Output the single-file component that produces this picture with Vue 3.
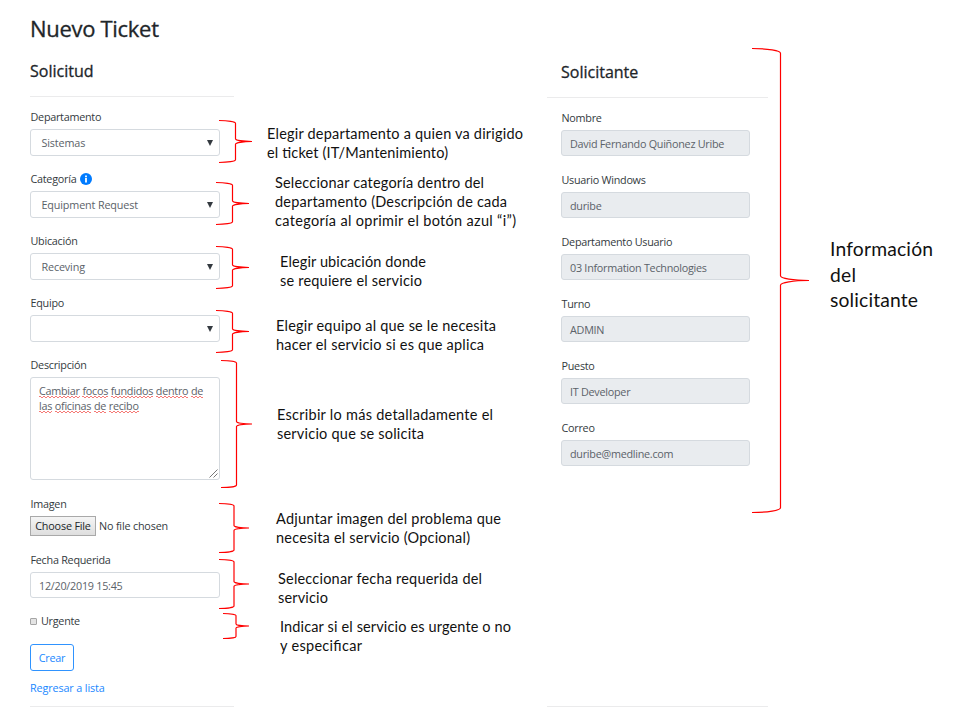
<script setup>
const selects = [
  { label: 'Departamento', value: 'Sistemas' },
  { label: 'Categoría', value: 'Equipment Request', info: true },
  { label: 'Ubicación', value: 'Receving' },
  { label: 'Equipo', value: '' },
]

const requester = [
  { label: 'Nombre', value: 'David Fernando Quiñonez Uribe' },
  { label: 'Usuario Windows', value: 'duribe' },
  { label: 'Departamento Usuario', value: '03 Information Technologies' },
  { label: 'Turno', value: 'ADMIN' },
  { label: 'Puesto', value: 'IT Developer' },
  { label: 'Correo', value: 'duribe@medline.com' },
]

const description = [
  ['Cambiar', 'focos', 'fundidos', 'dentro', 'de'],
  ['las', 'oficinas', 'de', 'recibo'],
]

// Right braces: left, right, top, bottom
const braces = [
  [219, 252, 120.5, 162.5],
  [216, 249, 182.5, 224.5],
  [216, 249, 246.5, 288.5],
  [216, 249, 310.5, 352.5],
  [221, 252, 360.5, 487.5],
  [219, 249, 503.5, 552.5],
  [219, 249, 559.5, 608.5],
  [223, 249, 613.5, 638.5],
  [752, 809, 48.5, 512.5],
]

function bracePath([l, r, t, b]) {
  const rx = (r - l) / 2
  const ry = Math.min(r - l, b - t) / 12
  const x = l + rx
  const m = (t + b) / 2
  return `M${l} ${t}A${rx} ${ry} 0 0 1 ${x} ${t + ry}V${m - ry}A${rx} ${ry} 0 0 0 ${r} ${m}A${rx} ${ry} 0 0 0 ${x} ${m + ry}V${b - ry}A${rx} ${ry} 0 0 1 ${l} ${b}`
}

// Note lines: x, baseline, width, text
const notes = [
  [267, 139, 256, 'Elegir departamento a quien va dirigido'],
  [267, 158, 181, 'el ticket (IT/Mantenimiento)'],
  [275, 188, 209, 'Seleccionar categoría dentro del'],
  [275, 207, 232, 'departamento (Descripción de cada'],
  [275, 226, 241, 'categoría al oprimir el botón azul “i”)'],
  [280, 267, 146, 'Elegir ubicación donde'],
  [280, 286, 142, 'se requiere el servicio'],
  [276, 331, 220, 'Elegir equipo al que se le necesita'],
  [276, 350, 208, 'hacer el servicio si es que aplica'],
  [277, 420, 216, 'Escribir lo más detalladamente el'],
  [277, 439, 147, 'servicio que se solicita'],
  [276, 524, 225, 'Adjuntar imagen del problema que'],
  [276, 543, 194, 'necesita el servicio (Opcional)'],
  [278, 584, 204, 'Seleccionar fecha requerida del'],
  [278, 603, 50, 'servicio'],
  [280, 632, 231, 'Indicar si el servicio es urgente o no'],
  [280, 651, 82, 'y especificar'],
]

const bigNotes = [
  [830, 256, 103, 'Información'],
  [830, 282, 26, 'del'],
  [830, 307, 88, 'solicitante'],
]
</script>

<template>
  <div class="page">
    <section class="request">
      <h1>Nuevo Ticket</h1>
      <h2>Solicitud</h2>
      <hr />
      <div v-for="s in selects" :key="s.label" class="group">
        <div class="label">
          {{ s.label }}
          <svg v-if="s.info" class="info" viewBox="0 0 12 12">
            <circle cx="6" cy="6" r="6" fill="#007bff" />
            <path d="M5.1 2.4h1.8v1.5H5.1zM5.1 4.8h1.8v4.6H5.1z" fill="#fff" />
          </svg>
        </div>
        <div class="control select">
          <span>{{ s.value }}</span>
          <svg class="arrow" viewBox="0 0 6 6"><path d="M0 0h6L3 6z" fill="#343a40" /></svg>
        </div>
      </div>
      <div class="group description">
        <div class="label">Descripción</div>
        <div class="control textarea">
          <div v-for="(line, i) in description" :key="i" class="line">
            <span v-for="(word, j) in line" :key="j" class="misspelled">{{ word }}</span>
          </div>
          <svg class="grip" viewBox="0 0 9 9"><path d="M.5 8.5l8-8M4.5 8.5l4-4" stroke="#777" fill="none" /></svg>
        </div>
      </div>
      <div class="group image">
        <div class="label">Imagen</div>
        <div class="file">
          <span class="choose">Choose File</span>
          <span>No file chosen</span>
        </div>
      </div>
      <div class="group date">
        <div class="label">Fecha Requerida</div>
        <div class="control">12/20/2019 15:45</div>
      </div>
      <div class="check"><i class="box"></i><span>Urgente</span></div>
      <div class="create">Crear</div>
      <div class="back">Regresar a lista</div>
      <hr />
    </section>

    <section class="requester">
      <h2>Solicitante</h2>
      <hr />
      <div class="fields">
        <div v-for="f in requester" :key="f.label" class="group">
          <div class="label">{{ f.label }}</div>
          <div class="control disabled">{{ f.value }}</div>
        </div>
      </div>
      <hr class="end" />
    </section>

    <svg class="annotations" width="960" height="720" viewBox="0 0 960 720">
      <path v-for="(b, i) in braces" :key="i" :d="bracePath(b)" class="brace" />
      <text v-for="n in notes" :key="n[1]" :x="n[0]" :y="n[1]" :textLength="n[2]" class="note">{{ n[3] }}</text>
      <text v-for="n in bigNotes" :key="n[1]" :x="n[0]" :y="n[1]" :textLength="n[2]" class="note big">{{ n[3] }}</text>
    </svg>
  </div>
</template>

<style>
body {
  background: #fff;
}
</style>

<style scoped>
* {
  box-sizing: border-box;
}
.page {
  position: relative;
  width: 960px;
  height: 720px;
  overflow: hidden;
  display: flex;
  background: #fff;
  color: #343a40;
  font: 10.8px/16px "Open Sans", "Noto Sans", sans-serif;
  letter-spacing: -0.26px;
}
.request {
  width: 204px;
  margin-left: 30px;
  padding-top: 12px;
}
.requester {
  width: 221px;
  margin-left: 313px;
  padding-top: 60px;
}
h1,
h2 {
  margin: 0;
  color: #212529;
  font-weight: 500;
  white-space: nowrap;
}
h1 {
  font-size: 22px;
  line-height: 32px;
  letter-spacing: -0.3px;
  -webkit-text-stroke: 0.3px #212529;
}
h2 {
  font-size: 16px;
  line-height: 25px;
  letter-spacing: 0;
  -webkit-text-stroke: 0.3px #212529;
}
.request h2 {
  margin-top: 15px;
}
.requester h2 {
  padding-left: 14px;
}
hr {
  height: 1px;
  margin: 12px 0 0;
  border: 0;
  background: #ebebec;
}
.group {
  width: 190px;
  height: 62px;
}
hr + .group {
  margin-top: 7px;
}
.label {
  display: flex;
  align-items: center;
  gap: 4px;
  height: 25px;
  padding-left: 0.5px;
}
.info {
  width: 12px;
  height: 12px;
}
.control {
  display: flex;
  align-items: center;
  height: 27px;
  padding: 1px 9px 0 8px;
  border: 1px solid #d5dadf;
  border-radius: 3px;
  color: #5b6269;
}
.select {
  justify-content: space-between;
  padding: 0 6px 0 10.5px;
  letter-spacing: -0.15px;
}
.arrow {
  width: 6px;
  height: 6px;
}
.description {
  height: 139px;
}
.textarea {
  position: relative;
  display: block;
  height: 103px;
  padding: 5px 8px;
}
.line {
  display: flex;
  gap: 2.7px;
  height: 15px;
  line-height: 15px;
}
.misspelled {
  height: 15px;
  background-image:
    repeating-linear-gradient(90deg, #f57a76 0 2px, transparent 2px 4px),
    repeating-linear-gradient(90deg, transparent 0 2px, #f57a76 2px 4px);
  background-repeat: no-repeat;
  background-size: 100% 1px;
  background-position: 0 13px, 0 14px;
}
.grip {
  position: absolute;
  right: 1px;
  bottom: 1px;
  width: 9px;
  height: 9px;
}
.image {
  height: 56px;
}
.file {
  display: flex;
  align-items: center;
  gap: 3px;
  height: 20px;
  white-space: nowrap;
  letter-spacing: -0.18px;
}
.choose {
  width: 66px;
  height: 20px;
  border: 1px solid #a9a9a9;
  background: linear-gradient(#f5f5f5, #dedede);
  color: #212529;
  line-height: 18px;
  text-align: center;
}
.date {
  height: 66px;
}
.date .control {
  height: 26px;
}
.check {
  display: flex;
  align-items: center;
  gap: 4px;
  height: 16px;
}
.box {
  width: 7px;
  height: 7px;
  border: 1px solid #a5a5a5;
  border-radius: 1px;
  background: #e4e4e4;
}
.create {
  width: 44px;
  height: 27px;
  margin-top: 15px;
  border: 1px solid #2f93ff;
  border-radius: 3px;
  color: #1a88ff;
  line-height: 26px;
  text-align: center;
}
.back {
  margin-top: 9px;
  color: #1a88ff;
  letter-spacing: -0.13px;
}
.back + hr {
  margin-top: 10px;
}
.fields {
  height: 608px;
  padding: 7px 0 0 14px;
}
.fields .group {
  width: 189px;
}
.disabled {
  height: 26px;
  background: #e9ecef;
}
.end {
  margin: 0;
}
.annotations {
  position: absolute;
  inset: 0;
}
.brace {
  fill: none;
  stroke: #f00;
  stroke-width: 1.2;
}
.note {
  fill: #111;
  font: 14.5px Lato, "Open Sans", sans-serif;
  letter-spacing: 0;
}
.big {
  font-size: 19.3px;
}
</style>
